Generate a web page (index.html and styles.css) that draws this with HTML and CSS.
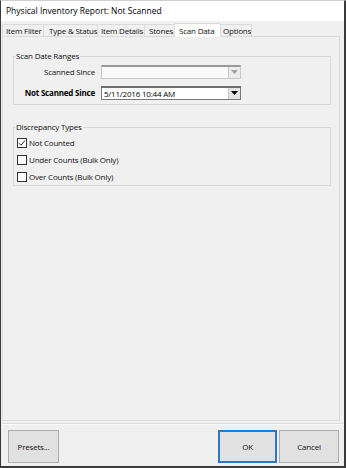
FILE: index.html
```html
<!DOCTYPE html>
<html>
<head>
<meta charset="utf-8">
<link rel="stylesheet" href="styles.css">
</head>
<body>
<div class="window">
  <div class="titlebar">Physical Inventory Report: Not Scanned</div>
  <div class="client">
    <div class="tabs">
      <div class="tab t1">Item Filter</div>
      <div class="tab t2">Type &amp; Status</div>
      <div class="tab t3">Item Details</div>
      <div class="tab t4">Stones</div>
      <div class="tab t5 active">Scan Data</div>
      <div class="tab t6">Options</div>
    </div>
    <div class="panel">
      <fieldset class="group g1">
        <legend>Scan Date Ranges</legend>
        <div class="row">
          <span class="label">Scanned Since</span>
          <div class="combo disabled">
            <span class="value"></span>
            <span class="drop"><svg width="7" height="4" viewBox="0 0 7 4"><path d="M0 0h7L3.5 4z" fill="#a0a0a0"/></svg></span>
          </div>
        </div>
        <div class="row">
          <span class="label bold">Not Scanned Since</span>
          <div class="combo">
            <span class="value">5/11/2016 10:44 AM</span>
            <span class="drop"><svg width="7" height="4" viewBox="0 0 7 4"><path d="M0 0h7L3.5 4z" fill="#000"/></svg></span>
          </div>
        </div>
      </fieldset>
      <fieldset class="group g2">
        <legend>Discrepancy Types</legend>
        <label class="check"><span class="box"><svg width="8" height="8" viewBox="0 0 8 8"><path d="M1 4.2l2 2L7 1.5" fill="none" stroke="#222" stroke-width="1"/></svg></span>Not Counted</label>
        <label class="check"><span class="box"></span>Under Counts (Bulk Only)</label>
        <label class="check"><span class="box"></span>Over Counts (Bulk Only)</label>
      </fieldset>
    </div>
    <div class="footer">
      <button class="btn presets">Presets...</button>
      <div class="spacer"></div>
      <button class="btn ok">OK</button>
      <button class="btn cancel">Cancel</button>
    </div>
  </div>
</div>
</body>
</html>
```
FILE: styles.css
```css
* { box-sizing: border-box; }
html, body { margin: 0; padding: 0; background: #ffffff; }
body {
  font-family: "Open Sans", "Noto Sans", "Liberation Sans", sans-serif;
  font-size: 8px;
  letter-spacing: -0.2px;
  color: #111;
}
.window {
  width: 346px;
  height: 468px;
  border-left: 1px solid #3a3a3a;
  border-right: 2px solid #3a3a3a;
  border-bottom: 2px solid #3a3a3a;
  border-top: 1px solid #d0d0d0;
  display: flex;
  flex-direction: column;
  background: #fff;
}
.titlebar {
  height: 20px;
  line-height: 19px;
  padding-left: 5px;
  font-size: 8.5px;
  letter-spacing: 0;
  color: #000;
  background: #fff;
}
.client {
  flex: 1;
  background: #f0f0f0;
  display: flex;
  flex-direction: column;
  padding-left: 1px;
}
.tabs {
  display: flex;
  height: 15px;
  padding-top: 2px;
  align-items: flex-end;
}
.tab {
  height: 12px;
  line-height: 11px;
  padding-left: 3px;
  border: 1px solid #dadada;
  border-bottom: none;
  border-right: none;
  background: #f0f0f0;
  white-space: nowrap;
  overflow: hidden;
}
.t1 { width: 41px; }
.t2 { width: 54px; padding-left: 5px; }
.t3 { width: 47px; padding-left: 3px; }
.t4 { width: 30px; padding-left: 4px; }
.t5 { width: 46px; }
.t6 { width: 32px; padding-left: 2px; border-right: 1px solid #dadada; }
.tab.active {
  height: 14px;
  line-height: 13px;
  background: #fff;
  padding-left: 4px;
  margin-bottom: -1px;
  position: relative;
  z-index: 1;
}
.panel {
  width: 338px;
  height: 385px;
  border: 1px solid #dadada;
  background: #f0f0f0;
  padding: 14px 0 0 10px;
}
.group {
  margin: 0;
  width: 318px;
  border: 1px solid #d8d8d8;
  padding: 0;
}
.group legend {
  padding: 0 1px;
  margin-left: 1px;
  line-height: 10px;
}
.g1 { height: 54px; padding-top: 3px; }
.g2 { height: 64px; margin-top: 17px; padding-top: 2px; }
.row {
  display: flex;
  align-items: center;
  height: 15px;
  margin-bottom: 6px;
}
.label {
  width: 87px;
  text-align: right;
  padding-right: 6px;
  white-space: nowrap;
}
.label.bold { font-weight: bold; color: #000; }
.combo {
  width: 140px;
  height: 14px;
  display: flex;
  border: 1px solid #7a7a7a;
  border-top: 2px solid #6e6e6e;
  background: #fff;
}
.combo.disabled {
  border-color: #c8c8c8;
  border-top-color: #9a9a9a;
  background: #f9f9f9;
}
.combo .value {
  flex: 1;
  padding-left: 2px;
  line-height: 11px;
  color: #000;
}
.drop {
  width: 12px;
  background: #e4e4e4;
  border-left: 1px solid #c8c8c8;
  display: flex;
  align-items: center;
  justify-content: center;
}
.combo.disabled .drop { background: #ececec; }
.check {
  display: flex;
  align-items: center;
  height: 17px;
  padding-left: 3px;
}
.box {
  width: 10px;
  height: 10px;
  border: 1px solid #333;
  background: #fff;
  margin-right: 2px;
  display: flex;
  align-items: center;
  justify-content: center;
}
.footer {
  flex: 1;
  border-top: 1px solid #dcdcdc;
  margin-top: 2px;
  display: flex;
  align-items: flex-start;
  padding: 6px 5px 0 6px;
  box-shadow: inset 0 1px 0 #fafafa;
}
.spacer { flex: 1; }
.btn {
  font-family: inherit;
  font-size: 8px;
  letter-spacing: -0.2px;
  color: #111;
  height: 33px;
  background: #e1e1e1;
  border: 1px solid #adadad;
  padding: 0;
}
.presets { width: 51px; }
.ok { width: 59px; border: 2px solid #2a79c8; margin-right: 2px; }
.cancel { width: 60px; }
```
